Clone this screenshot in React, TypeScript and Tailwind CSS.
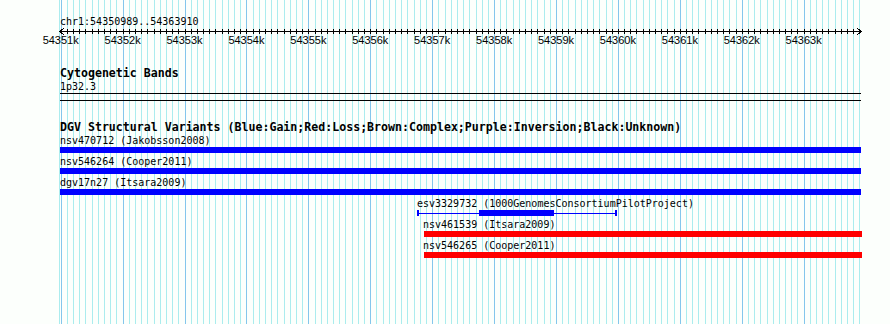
import React from "react";

const START = 54350989;
const END = 54363910;
const LEFT = 60;
const WIDTH = 800;

const toX = (bp: number) => LEFT + ((bp - START) * WIDTH) / (END - START);
const clipX = (x: number) => Math.max(LEFT, Math.min(862, x));

// grid + ruler positions, every 100bp
const ticks: number[] = [];
for (let bp = 54351000; bp <= END; bp += 100) ticks.push(bp);

const bars = [
  { name: "nsv470712 (Jakobsson2008)", start: 54340000, end: 54363926, color: "bg-[#0000ff]" },
  { name: "nsv546264 (Cooper2011)", start: 54340000, end: 54363926, color: "bg-[#0000ff]" },
  { name: "dgv17n27 (Itsara2009)", start: 54340000, end: 54363926, color: "bg-[#0000ff]" },
];

const redBars = [
  { name: "nsv461539 (Itsara2009)", start: 54356868, end: 54370000 },
  { name: "nsv546265 (Cooper2011)", start: 54356868, end: 54370000 },
];

const esv = {
  name: "esv3329732 (1000GenomesConsortiumPilotProject)",
  start: 54356771,
  end: 54359969,
  thickStart: 54357756,
  thickEnd: 54358968,
};

const Grid = () => (
  <svg
    className="absolute inset-0"
    width={890}
    height={324}
    shapeRendering="crispEdges"
  >
    <rect x={59} y={0} width={1} height={324} fill="#aaecee" />
    {ticks.map((bp) => (
      <rect
        key={bp}
        x={Math.round(toX(bp))}
        y={0}
        width={1}
        height={324}
        fill={bp % 1000 === 0 ? "#84c6ec" : "#aaecee"}
      />
    ))}
  </svg>
);

const Ruler = () => (
  <svg width={890} height={20} className="block" shapeRendering="crispEdges">
    <rect x={60} y={3} width={801} height={1} fill="#000" />
    {ticks.map((bp) => (
      <rect key={bp} x={Math.round(toX(bp))} y={1} width={1} height={5} fill="#000" />
    ))}
    <polyline points="64,0 60,3.5 64,7" fill="none" stroke="#000" strokeWidth={1} />
    <polyline points="857,0 861,3.5 857,7" fill="none" stroke="#000" strokeWidth={1} />
    {ticks
      .filter((bp) => bp % 1000 === 0)
      .map((bp) => (
        <text
          key={bp}
          x={toX(bp)}
          y={16}
          textAnchor="middle"
          fontFamily="'Liberation Sans', Arial, sans-serif"
          fontSize={11}
          fill="#000"
          shapeRendering="auto"
        >
          {bp / 1000}k
        </text>
      ))}
  </svg>
);

const Label = ({ x, children }: { x: number; children: React.ReactNode }) => (
  <div
    className="h-[13px] whitespace-nowrap text-[10px] leading-[13px] text-black"
    style={{ paddingLeft: x - LEFT }}
  >
    {children}
  </div>
);

export default function App() {
  const esvX1 = toX(esv.start);
  const esvX2 = toX(esv.end);
  const thickX1 = toX(esv.thickStart);
  const thickX2 = toX(esv.thickEnd);

  return (
    <div className="relative h-[324px] w-[890px] overflow-hidden bg-[#fcfffc] font-['DejaVu_Sans_Mono','Liberation_Mono',monospace]">
      <Grid />
      <div className="relative">
        {/* ruler */}
        <div className="pl-[60px] pt-[15px] text-[10px] leading-[13px] text-black">
          chr1:54350989..54363910
        </div>
        <Ruler />

        {/* cytogenetic bands */}
        <div className="pl-[60px]">
          <div className="mt-[19px] h-[13px] text-[11.6px] font-bold leading-[13px] text-black">
            Cytogenetic Bands
          </div>
          <div className="h-[13px] text-[10px] leading-[13px] text-black">1p32.3</div>
          <div className="h-px w-[801px] bg-black" />
          <div className="mt-[6px] h-px w-[801px] bg-black" />

          {/* DGV */}
          <div className="mt-[20px] h-[13px] whitespace-nowrap text-[11.6px] font-bold leading-[13px] text-black">
            DGV Structural Variants (Blue:Gain;Red:Loss;Brown:Complex;Purple:Inversion;Black:Unknown)
          </div>
        </div>

        <div className="flex flex-col">
          {bars.map((b, i) => {
            const x1 = clipX(toX(b.start));
            const x2 = clipX(toX(b.end));
            return (
              <div key={b.name} className={i === 0 ? "" : "mt-[2px]"}>
                <div className="pl-[60px]">
                  <Label x={Math.max(LEFT, x1 - 1)}>{b.name}</Label>
                </div>
                <div
                  className={`h-[6px] ${b.color}`}
                  style={{ marginLeft: x1, width: x2 - x1 }}
                />
              </div>
            );
          })}

          {/* esv with thick block */}
          <div className="mt-[2px]">
            <div className="pl-[60px]">
              <Label x={esvX1 - 1}>{esv.name}</Label>
            </div>
            <div
              className="flex h-[6px] items-start"
              style={{ marginLeft: esvX1 - 1, width: esvX2 - esvX1 + 2 }}
            >
              <div className="h-[6px] w-[2px] bg-[#0000ff]" />
              <div className="mt-[3px] h-px bg-[#0000ff]" style={{ width: thickX1 - esvX1 - 1 }} />
              <div className="h-[6px] bg-[#0000ff]" style={{ width: thickX2 - thickX1 }} />
              <div className="mt-[3px] h-px flex-1 bg-[#0000ff]" />
              <div className="h-[6px] w-[2px] bg-[#0000ff]" />
            </div>
          </div>

          {redBars.map((b) => {
            const x1 = clipX(toX(b.start));
            const x2 = clipX(toX(b.end));
            return (
              <div key={b.name} className="mt-[2px]">
                <div className="pl-[60px]">
                  <Label x={x1 - 1}>{b.name}</Label>
                </div>
                <div className="h-[6px] bg-[#ff0000]" style={{ marginLeft: x1, width: x2 - x1 }} />
              </div>
            );
          })}
        </div>
      </div>
    </div>
  );
}
